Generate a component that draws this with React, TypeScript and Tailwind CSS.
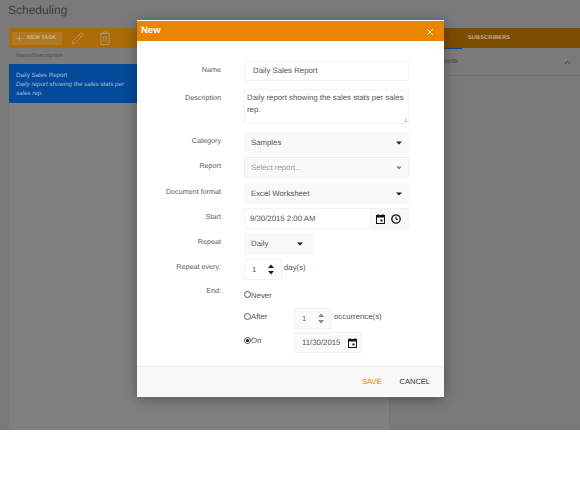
import React from "react";
import { Pencil, Plus, ChevronUp, X } from "lucide-react";

const Caret = ({ light = false }: { light?: boolean }) => (
  <svg width="6" height="4" viewBox="0 0 6 4" className="shrink-0">
    <path d="M0 0.5h6L3 3.500z" fill={light ? "#8a8a8a" : "#1c1c1c"} />
  </svg>
);

const Spin = ({ light = false }: { light?: boolean }) => (
  <svg width="6" height="11" viewBox="0 0 6 11" className="shrink-0">
    <path d="M0 4l3-3.500 3 3.500z M0 7l3 3.500 3-3.500z" fill={light ? "#8a8a8a" : "#1c1c1c"} />
  </svg>
);

const Cal = () => (
  <svg width="9" height="10" viewBox="0 0 9 10" className="shrink-0">
    <path fillRule="evenodd" d="M1.500 0h1v1h4V0h1v1H9v9H0V1h1.500zM1 3.500V9h7V3.500z" fill="#111" />
    <rect x="4.500" y="5.500" width="2" height="2" fill="#111" />
  </svg>
);

const Clock = () => (
  <svg width="10" height="10" viewBox="0 0 10 10" className="shrink-0">
    <circle cx="5" cy="5" r="4.200" fill="none" stroke="#111" strokeWidth="1.300" />
    <path d="M5 2.500V5.300H7" fill="none" stroke="#111" strokeWidth="1" />
  </svg>
);

const Trash = () => (
  <svg width="10" height="14" viewBox="0 0 10 14" fill="none" stroke="#ab9470" strokeWidth="1">
    <path d="M0 2.500h10M3 2.500V1h4v1.500M1 2.500V13.500h8V2.500M3.800 5v6M6.200 5v6" />
  </svg>
);

const Radio = ({ on = false }: { on?: boolean }) => (
  <span className="w-[7px] h-[7px] rounded-full border border-[#555] bg-white flex items-center justify-center shrink-0 -mt-[2px]">
    {on && <span className="w-[3px] h-[3px] rounded-full bg-[#111]" />}
  </span>
);

const Row = ({ label, h, mb, pad = "pt-[3px]", children }: { label: string; h: string; mb: string; pad?: string; children: React.ReactNode }) => (
  <div className={`flex ${h} ${mb}`}>
    <div className={`w-[84px] text-right text-[7.200px] leading-[12px] ${pad} text-[#5c5c5c] whitespace-nowrap`}>{label}</div>
    <div className="ml-[23px] flex items-start">{children}</div>
  </div>
);

export default function App() {
  return (
    <div className="relative w-[580px] h-[500px] bg-white overflow-hidden font-['Liberation_Sans',sans-serif] [text-rendering:geometricPrecision]">
      <div className="h-[430px] bg-[#7a7a7a] flex flex-col">
        <h1 className="text-[12px] leading-[20px] pl-[8px] h-[28px] text-[#3a3a3a]">Scheduling</h1>
        <div className="flex-1 flex pl-[9px]">
          <div className="w-[381px] bg-[#808080] border-r border-[#767676] flex flex-col">
            <div className="h-[20px] bg-[#aa6b08] flex items-center pl-[3px]">
              <div className="h-[13px] w-[50px] bg-[#b07a25] flex items-center pl-[3px] gap-[3px] text-[#cdb893] text-[5.500px] font-bold whitespace-nowrap">
                <Plus size={9} strokeWidth={1.500} className="shrink-0" />NEW TASK
              </div>
              <Pencil size={13} color="#d0b994" strokeWidth={1} className="ml-[9px]" />
              <span className="ml-[16px] flex"><Trash /></span>
            </div>
            <div className="h-[16px] bg-[#7c7c7c] flex items-center pl-[7px] text-[5.500px] font-bold text-[#5a5a5a]">Name/Description</div>
            <div className="h-[39px] bg-[#034a9a] px-[7px] pt-[7px] text-[6.200px] leading-[9px] text-[#a9bcd2]">
              <div>Daily Sales Report</div>
              <div className="italic w-[115px]">Daily report showing the sales stats per sales rep.</div>
            </div>
          </div>
          <div className="flex-1 ml-[7px] flex flex-col">
            <div className="h-[20px] bg-[#7a4d00] flex items-center pl-[71px] text-[#c3b69f] text-[5.500px] font-bold tracking-[0.2px]">SUBSCRIBERS</div>
            <div className="h-[1px] bg-[#034a9a] w-[65px]" />
            <div className="h-[27px] border-b border-[#727272] flex items-center justify-between pl-[24px] pr-[8px] text-[6.500px] text-[#444]">
              <span className="ml-[19px]">ments</span>
              <ChevronUp size={9} color="#333" />
            </div>
          </div>
        </div>
      </div>
      <div className="absolute left-[137px] top-[20px] w-[307px] h-[377px] bg-white shadow-[0_2px_12px_rgba(0,0,0,0.35)] flex flex-col">
        <div className="h-[20px] mt-[1px] pt-[1px] bg-[#e98500] flex items-center justify-between pl-[4px] pr-[9px] text-white text-[9.500px] font-bold">
          <span>New</span>
          <X size={10} color="#fff" strokeWidth={2} />
        </div>
        <div className="flex-1 pt-[20px] text-[7.800px] text-[#555]">
          <Row label="Name" h="h-[20px]" mb="mb-[8px]">
            <div className="w-[165px] h-[20px] border border-[#f3f3f3] rounded-[2px] pl-[8px] flex items-center">Daily Sales Report</div>
          </Row>
          <Row label="Description" h="h-[35px]" mb="mb-[8px]">
            <div className="relative w-[165px] h-[35px] border border-[#f3f3f3] rounded-[2px] pl-[2px] pt-[2px] leading-[12px]">
              Daily report showing the sales stats per sales rep.
              <svg width="4" height="4" viewBox="0 0 4 4" className="absolute right-[1px] bottom-[1px]">
                <path d="M3 0h1v1H3zM2 1.500h1v1H2zM3 1.500h1v1H3zM1 3h1v1H1zM2 3h1v1H2zM3 3h1v1H3z" fill="#bbb" />
              </svg>
            </div>
          </Row>
          <Row label="Category" h="h-[21px]" mb="mb-[4px]">
            <div className="w-[165px] h-[21px] bg-[#f9f9f9] pl-[7px] pr-[7px] flex items-center justify-between">Samples<Caret /></div>
          </Row>
          <Row label="Report" h="h-[21px]" mb="mb-[5px]">
            <div className="w-[165px] h-[21px] bg-[#f9f9f9] border border-[#f0f0f0] pl-[6px] pr-[6px] flex items-center justify-between text-[#999]">Select report...<Caret light /></div>
          </Row>
          <Row label="Document format" h="h-[21px]" mb="mb-[4px]">
            <div className="w-[165px] h-[21px] bg-[#f9f9f9] pl-[7px] pr-[7px] flex items-center justify-between">Excel Worksheet<Caret /></div>
          </Row>
          <Row label="Start" h="h-[21px]" mb="mb-[4px]">
            <div className="w-[165px] h-[21px] border border-[#f3f3f3] flex items-center justify-between">
              <span className="pl-[5px]">9/30/2015 2:00 AM</span>
              <span className="w-[39px] h-full bg-[#f9f9f9] flex items-center justify-center gap-[6px]"><Cal /><Clock /></span>
            </div>
          </Row>
          <Row label="Repeat" h="h-[22px]" mb="mb-[4px]">
            <div className="w-[69px] h-[22px] bg-[#f9f9f9] pl-[7px] pr-[10px] flex items-center justify-between">Daily<Caret /></div>
          </Row>
          <Row label="Repeat every:" h="h-[21px]" mb="mb-[8px]" pad="pt-[2px]">
            <div className="w-[38px] h-[21px] border border-[#f3f3f3] pl-[7px] pr-[7px] flex items-center justify-between">1<Spin /></div>
            <span className="ml-[2px] leading-[18px]">day(s)</span>
          </Row>
          <Row label="End:" h="h-[18px]" mb="mb-[2px]" pad="pt-0 -mt-[3px]">
            <div className="flex items-center h-[14px] pt-[1px]"><Radio /><span>Never</span></div>
          </Row>
          <Row label="" h="h-[21px]" mb="mb-[3px]">
            <div className="w-[50px] flex items-center h-[18px]"><Radio /><span>After</span></div>
            <div className="w-[38px] h-[21px] bg-[#fafafa] border border-[#f3f3f3] pl-[7px] pr-[7px] flex items-center justify-between text-[#777]">1<Spin light /></div>
            <span className="ml-[2px] leading-[18px]">occurrence(s)</span>
          </Row>
          <Row label="" h="h-[21px]" mb="mb-0">
            <div className="w-[50px] flex items-center h-[18px]"><Radio on /><span>On</span></div>
            <div className="w-[68px] h-[21px] bg-[#fafafa] border border-[#f3f3f3] pl-[7px] pr-[4px] flex items-center justify-between">11/30/2015<Cal /></div>
          </Row>
        </div>
        <div className="h-[30px] bg-[#f8f8f8] border-t border-[#ececec] mb-[1px] flex items-center justify-end pr-[14px] gap-[18px] text-[7.500px]">
          <span className="text-[#e98500]">SAVE</span>
          <span className="text-[#333]">CANCEL</span>
        </div>
      </div>
    </div>
  );
}
